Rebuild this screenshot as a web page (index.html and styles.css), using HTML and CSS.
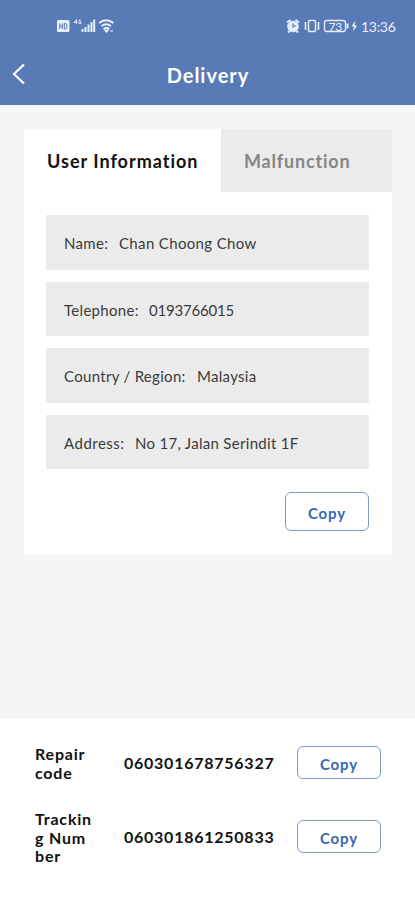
FILE: index.html
```html
<!DOCTYPE html>
<html lang="en">
<head>
<meta charset="utf-8">
<meta name="viewport" content="width=device-width, initial-scale=1">
<title>Delivery</title>
<link rel="stylesheet" href="styles.css">
</head>
<body>
<header class="header">
  <div class="status">
    <svg class="status-left" width="60" height="18" viewBox="0 0 60 18" fill="none" stroke="#e7eefb">
      <rect x="1" y="3" width="12.500" height="12" rx="1.500" fill="#e7eefb" stroke="none"/>
      <path d="M3.800 6.500V12M3.800 9.200h2.500M6.300 6.500V12M8.300 6.500V12h1q1.700 0 1.700-2.700T9.300 6.500z" stroke="#587bb8"/>
      <path d="M20.500 2.500l-2.500 3h3.500M20.500 2.500V7M25 3h-2v3.500h2V5h-1" stroke-width=".9"/>
      <path d="M26.500 15v-3M29.500 15v-5M32.500 15V7.500M35.500 15V5M38.200 15V2.500" stroke-width="2"/>
      <path d="M43 6q7-5.500 14.500 0M45.500 9q4.700-3.500 9.500 0M47.500 12q3-2 6 0" stroke-width="1.900"/>
      <path d="M48.500 13h4l-2 2.500zM54 14h3" fill="#e7eefb"/>
    </svg>
    <div class="status-right">
      <svg width="72" height="18" viewBox="0 0 72 18" fill="none" stroke="#e7eefb">
        <circle cx="7" cy="9.500" r="5.300" fill="#e7eefb"/>
        <path d="M1 5.500l3.500-2.500M13 5.500L9.500 3M3.500 14L2 15.500M10.500 14l1.500 1.500" stroke-width="2"/>
        <path d="M7 6.500v3.500l2.500-1.500" stroke="#587bb8" stroke-width="1.200"/>
        <rect x="22.500" y="3.500" width="7" height="11" rx="1" stroke-width="1.500"/>
        <path d="M19.500 5v8M32.500 5v8" stroke-width="1.600"/>
        <rect x="38.500" y="3.500" width="21" height="11" rx="2.500" stroke-width="1.300"/>
        <path d="M61.500 6.500v5" stroke-width="2"/>
        <text class="charge" x="42.500" y="13.500">73</text>
        <path d="M69.500 3.500l-4 6H68l-1 5 4-6h-2.500z" fill="#e7eefb" stroke="none"/>
      </svg>
      <span class="time">13:36</span>
    </div>
  </div>
  <div class="titlebar">
    <svg class="back" width="16" height="24" viewBox="0 0 16 24" fill="none" stroke="#fff" stroke-width="2.200"><path d="M13 2.500L3 12l10 9.500"/></svg>
    <h1 class="title">Delivery</h1>
  </div>
</header>
<main class="main">
  <section class="card">
    <nav class="tabs">
      <div class="tab tab-active"><span class="tab-user">User Information</span></div>
      <div class="tab tab-idle"><span class="tab-mal">Malfunction</span></div>
    </nav>
    <div class="fields">
      <div class="field"><span class="label label-name">Name:</span><span class="value-name">Chan Choong Chow</span></div>
      <div class="field"><span class="label label-phone">Telephone:</span><span class="value-phone">0193766015</span></div>
      <div class="field"><span class="label label-country">Country / Region:</span><span class="value-country">Malaysia</span></div>
      <div class="field"><span class="label label-address">Address:</span><span class="value-address">No 17, Jalan Serindit 1F</span></div>
    </div>
    <button class="copy copy-tall">Copy</button>
  </section>
</main>
<footer class="codes">
  <div class="code-row"><span class="code-name">Repair<br>code</span><span class="code">060301678756327</span><button class="copy">Copy</button></div>
  <div class="code-row code-row-last"><span class="code-name">Trackin<br>g Num<br>ber</span><span class="code">060301861250833</span><button class="copy">Copy</button></div>
</footer>
</body>
</html>
```
FILE: styles.css
```css
* { box-sizing: border-box; }
body {
  margin: 0;
  height: 900px;
  display: flex;
  flex-direction: column;
  background: #f5f5f5;
  color: #111;
  font-family: Lato, "Liberation Sans", sans-serif;
  overflow: hidden;
}
.header { height: 105px; background: #587bb8; color: #fff; }
.status { height: 46px; padding: 17px 19px 0 56px; display: flex; justify-content: space-between; }
.status-right { display: flex; }
.status-right svg { flex: none; }
.time { width: 35px; margin-left: 3px; font-size: 14px; line-height: 20px; color: #e7eefb; white-space: nowrap; letter-spacing: -.3px; }
.charge { font: 12px Lato, sans-serif; fill: #e7eefb; stroke: none; letter-spacing: -.3px; }
.titlebar { height: 59px; display: grid; grid-template-columns: 40px 1fr 40px; align-items: center; }
.back { margin: 0 0 4px 11px; }
.title { margin: -2px 0 0 1px; text-align: center; font-size: 20px; font-weight: 700; line-height: 24px; letter-spacing: 1px; }
.main { height: 614px; padding: 24px 23px 0 24px; }
.card { height: 426px; background: #fff; border-radius: 4px; overflow: hidden; display: flex; flex-direction: column; }
.tabs { display: grid; grid-template-columns: 197px 1fr; height: 63px; }
.tab { padding: 20px 23px 0; font-size: 18px; font-weight: 700; line-height: 25px; white-space: nowrap; }
.tab-idle { background: #ebebeb; color: #858585; }
.tab-user { letter-spacing: 1px; }
.tab-mal { letter-spacing: .8px; }
.fields { padding: 23px 23px 0 22px; display: grid; gap: 12px; }
.field { height: 54.600px; padding: 2px 18px 0; background: #ebebeb; display: flex; align-items: center; color: #3b3b3b; font-size: 15px; white-space: nowrap; }
.label { flex: none; }
.label-name { width: 55px; letter-spacing: .3px; }
.label-phone { width: 85px; letter-spacing: .3px; }
.label-country { width: 133px; letter-spacing: .3px; }
.label-address { width: 71px; letter-spacing: .5px; }
.value-name { letter-spacing: .35px; }
.value-phone { letter-spacing: -.2px; }
.value-country { letter-spacing: .3px; }
.value-address { letter-spacing: .3px; }
.copy { width: 84px; height: 33px; padding: 2px 0 0; border: 1px solid #7f9bc7; border-radius: 6px; background: #fff; color: #3667ae; font: 700 15px Lato, sans-serif; letter-spacing: .9px; }
.copy-tall { height: 39px; margin: 23px 23px 0 auto; }
.codes { flex: 1; background: #fff; padding: 24px 34px 0 35px; }
.code-row { height: 40px; display: grid; grid-template-columns: 89px 1fr 84px; align-items: center; font-size: 16px; font-weight: 700; line-height: 18.700px; }
.code-row-last { height: 58px; margin-top: 25px; }
.code-name { margin-top: 2px; letter-spacing: .8px; white-space: nowrap; }
.code { padding-top: 1px; letter-spacing: .75px; white-space: nowrap; }
.code-row .copy { margin-top: -1px; }
```
